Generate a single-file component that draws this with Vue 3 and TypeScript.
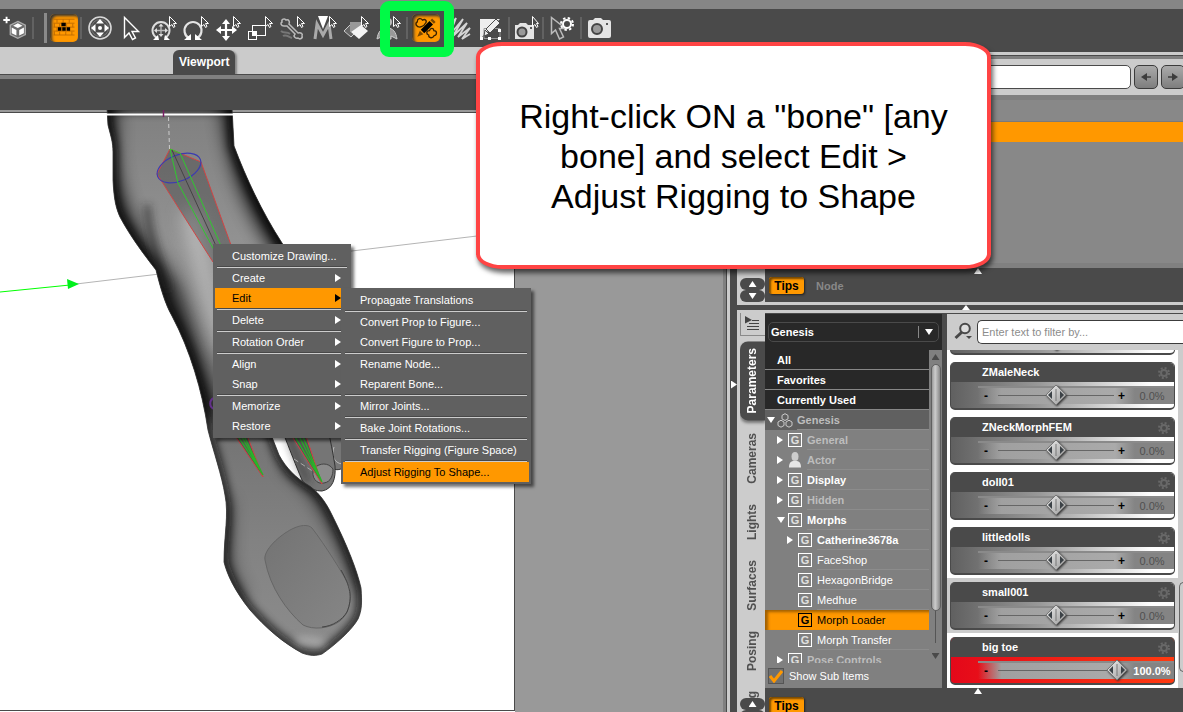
<script setup lang="ts">
import { ref } from 'vue'

interface MenuEntry { label?: string; arrow?: boolean; active?: boolean; sep?: boolean }
interface TreeNode { label: string; level: number; state: 'open' | 'closed' | 'none'; dim?: boolean; bold?: boolean; icon?: 'group' | 'actor' | 'g'; selected?: boolean }
interface Param { id: string; name: string; value: number; text: string; shade?: boolean; hot?: boolean }

const contextMenu: MenuEntry[] = [
  { label: 'Customize Drawing...' }, { sep: true },
  { label: 'Create', arrow: true }, { label: 'Edit', arrow: true, active: true }, { sep: true },
  { label: 'Delete', arrow: true }, { sep: true },
  { label: 'Rotation Order', arrow: true }, { sep: true },
  { label: 'Align', arrow: true }, { label: 'Snap', arrow: true }, { sep: true },
  { label: 'Memorize', arrow: true }, { label: 'Restore', arrow: true },
]
const subMenu: MenuEntry[] = [
  { label: 'Propagate Translations' }, { sep: true },
  { label: 'Convert Prop to Figure...' }, { label: 'Convert Figure to Prop...' }, { sep: true },
  { label: 'Rename Node...' }, { label: 'Reparent Bone...' }, { sep: true },
  { label: 'Mirror Joints...' }, { sep: true },
  { label: 'Bake Joint Rotations...' }, { sep: true },
  { label: 'Transfer Rigging (Figure Space)' }, { sep: true },
  { label: 'Adjust Rigging To Shape...', active: true },
]
const filters: string[] = ['All', 'Favorites', 'Currently Used']
const tree: TreeNode[] = [
  { label: 'Genesis', level: 0, state: 'open', dim: true, bold: true, icon: 'group' },
  { label: 'General', level: 1, state: 'closed', dim: true, bold: true, icon: 'g' },
  { label: 'Actor', level: 1, state: 'closed', dim: true, bold: true, icon: 'actor' },
  { label: 'Display', level: 1, state: 'closed', bold: true, icon: 'g' },
  { label: 'Hidden', level: 1, state: 'closed', dim: true, bold: true, icon: 'g' },
  { label: 'Morphs', level: 1, state: 'open', bold: true, icon: 'g' },
  { label: 'Catherine3678a', level: 2, state: 'closed', bold: true, icon: 'g' },
  { label: 'FaceShop', level: 2, state: 'none', icon: 'g' },
  { label: 'HexagonBridge', level: 2, state: 'none', icon: 'g' },
  { label: 'Medhue', level: 2, state: 'none', icon: 'g' },
  { label: 'Morph Loader', level: 2, state: 'none', icon: 'g', selected: true },
  { label: 'Morph Transfer', level: 2, state: 'none', icon: 'g' },
  { label: 'Pose Controls', level: 1, state: 'closed', dim: true, bold: true, icon: 'g' },
]
const params = ref<Param[]>([
  { id: 'p0', name: '', value: 0, text: '' },
  { id: 'p1', name: 'ZMaleNeck', value: 0, text: '0.0%' },
  { id: 'p2', name: 'ZNeckMorphFEM', value: 0, text: '0.0%' },
  { id: 'p3', name: 'doll01', value: 0, text: '0.0%' },
  { id: 'p4', name: 'littledolls', value: 0, text: '0.0%' },
  { id: 'p5', name: 'small001', value: 0, text: '0.0%', shade: true },
  { id: 'p6', name: 'big toe', value: 100, text: '100.0%', hot: true },
])
const sideTabs: string[] = ['Parameters', 'Cameras', 'Lights', 'Surfaces', 'Posing', 'Shaping']
const figure = ref('Genesis')
const showSub = ref(true)
const filterText = ref('')
const path = ref('')
const footPath = 'M107 108L108 125C111 137 113 142 113 152V180C114 200 116 208 120 217C130 236 145 256 156 270C160 286 165 304 172 316C190 350 202 390 208 430C213 450 222 476 225 495C229 515 224 535 224 562C227 574 234 590 250 610C266 628 282 642 302 653C310 656 316 656 322 654C335 645 352 630 358 619C362 610 362 603 361 588C357 570 347 545 332 515C325 500 316 490 308 485C296 478 286 468 279 455L270 432L300 400V270L282 243C262 212 246 178 234 146L232 108Z'
</script>

<template>
  <div class="app">
    <header class="topstrip"></header>
    <nav class="toolbar" aria-label="Tools">
      <button class="tool first" aria-label="New primitive"><svg viewBox="0 0 32 32"><path d="M7 4v7M3.500 7.500h7" stroke="#fff" stroke-width="2"/><path d="M19 9l8 4v10l-8 4-8-4V13z" fill="#6c6c6c" stroke="#aaa" stroke-width="1.5"/><path d="M19 11l5 2.500-5 2.500-5-2.500zM12.500 15.500l5 2.500v6l-5-2.500zM25.500 15.500l-5 2.500v6l5-2.500z" fill="#fff"/></svg></button>
      <i class="sep"></i><i class="grip"></i>
      <button class="tool on" aria-label="Textured view"><svg viewBox="0 0 32 32"><path d="M4 6h24M4 10.500h24M4 15h24M4 19.500h24M4 24h24M8 6v4M15 6v4M22 6v4M5 11v4M11 11v4M19 11v4M26 11v4M8 15v5M15 15v5M22 15v5M5 20v4M11 20v4M18 20v4M25 20v4" stroke="#bd6a00" fill="none"/><path d="M13 10h5v4h-5zM9 15h4v4H9zM14 15h4v4h-4zM19 15h4v4h-4z" fill="#000"/></svg></button>
      <i class="sep tight"></i>
      <button class="tool" aria-label="Universal tool"><svg viewBox="0 0 32 32" fill="none"><circle cx="16" cy="16" r="11" stroke="#d8d8d8" stroke-width="1.6"/><circle cx="16" cy="16" r="8.500" stroke="#777"/><path d="M16 7l4 4.500h-8zM16 25l4-4.500h-8zM7 16l4.500-4v8zM25 16l-4.500-4v8z" fill="#fff"/><circle cx="16" cy="16" r="2" fill="#fff"/></svg></button>
      <button class="tool" aria-label="Node selection"><svg viewBox="0 0 32 32"><path d="M8.500 5.500v20l4.500-4.500 3.500 6.500 3-1.500-3.500-6.500h6.500z" fill="none" stroke="#fff" stroke-width="1.400"/></svg></button>
      <button class="tool" aria-label="Orbit"><svg viewBox="0 0 32 32" fill="none"><path d="M9 26A8.500 8.500 0 1 1 17 26" stroke="#ddd" stroke-width="2"/><path d="M13 13v11M7.500 18.500h11" stroke="#bbb" stroke-width="1.300"/><path d="M13 11.500l2.500 3h-5zM13 25l2.500-3h-5zM6 18.500l3-2.500v5zM20 18.500l-3-2.500v5z" fill="#ddd"/><path d="M5 28h6l-1-5zM22 28h-6l1-5z" fill="#fff"/><path class="cur" d="M21.500 4.500v10l2.500-2 1.500 3 1.500-1-1.500-3h3z"/></svg></button>
      <button class="tool" aria-label="Rotate"><svg viewBox="0 0 32 32" fill="none"><path d="M9 26A8.500 8.500 0 1 1 17 26" stroke="#e4e4e4" stroke-width="2.200"/><path d="M4 28h7v-6zM22 28h-7v-6z" fill="#fff"/><path class="cur" d="M21.500 4.500v10l2.500-2 1.500 3 1.500-1-1.500-3h3z"/></svg></button>
      <button class="tool" aria-label="Translate"><svg viewBox="0 0 32 32" fill="none"><path d="M14 10v16M6 18h17" stroke="#fff" stroke-width="2.200"/><path d="M14 7l4 5h-8zM14 29l4-5h-8zM4 18l5-4v8zM25 18l-5-4v8z" fill="#fff"/><path class="cur" d="M21.500 4.500v10l2.500-2 1.500 3 1.500-1-1.500-3h3z"/></svg></button>
      <button class="tool" aria-label="Scale"><svg viewBox="0 0 32 32" fill="none" stroke="#fff"><rect x="8.500" y="13.500" width="13" height="10"/><rect x="4.500" y="19.500" width="8" height="8" /><path d="M8 19h5v5H8z" fill="#fff" stroke="none"/><path class="cur" d="M21.500 4.500v10l2.500-2 1.500 3 1.500-1-1.500-3h3z"/></svg></button>
      <button class="tool" aria-label="Joint editor"><svg viewBox="0 0 32 32" fill="none" stroke="#bbb"><path d="M8 14c-3 0-4-3-2-4-1-3 3-4 4-2 3-1 4 2 3 4l9 9c3-1 5 1 4 3 1 2-2 4-4 2-3 1-5-2-3-4l-8-8z" stroke-width="1.500"/><path d="M5 19c3 3 6 0 9 3M7 24c3-2 6 1 9 2" stroke="#777" stroke-width="2"/><path class="cur" d="M21.500 4.500v10l2.500-2 1.500 3 1.500-1-1.500-3h3z"/></svg></button>
      <button class="tool" aria-label="Morph tool"><svg viewBox="0 0 32 32" fill="none"><path d="M7 27l2-15 6 11 6-11 2 15" stroke="#aaa" stroke-width="3"/><path d="M10 4h10l-5 13z" fill="#fff"/><path class="cur" d="M21.500 4.500v10l2.500-2 1.500 3 1.500-1-1.500-3h3z"/></svg></button>
      <button class="tool" aria-label="Surface selection"><svg viewBox="0 0 32 32" fill="none"><path d="M4 19l8-8 6 7-7 7z" fill="#666" stroke="#ccc"/><path d="M10 10h11v10H10z" fill="#999"/><path d="M11 20l10-7 7 6-9 8z" fill="#f4f4f4"/><path class="cur" d="M21.500 4.500v10l2.500-2 1.500 3 1.500-1-1.500-3h3z"/></svg></button>
      <button class="tool" aria-label="Region navigator"><svg viewBox="0 0 32 32" fill="none"><circle cx="16" cy="10" r="4" fill="#bbb"/><path d="M5 27c1-7 4-11 10-11s9 4 10 11l-6-3v3h-8v-3z" fill="#999" stroke="#ccc"/><path class="cur" d="M21.500 4.500v10l2.500-2 1.500 3 1.500-1-1.500-3h3z"/></svg></button>
      <i class="sep"></i>
      <button class="tool on" aria-label="Weight map brush"><svg viewBox="0 0 32 32" fill="none"><path d="M9 15c-4 0-6-4-3-6 0-4 4-5 6-2 3-2 6 1 3 4-1 3-4 3-6 4zM19 24c-3-1-3-5 1-5 1-4 5-3 5 0 4 0 4 5 0 6-1 3-6 3-6-1z" stroke="#3a2200" stroke-width="1.500"/><path d="M20 8l4 4-10 10-4-4z" fill="#000"/><path d="M21 7l2-2 4 4-2 2zM9 19l4 4-7 3z" fill="#7b4700"/></svg></button>
      <button class="tool" aria-label="Hair brush"><svg viewBox="0 0 32 32" fill="none"><path d="M3 21L14 6 9 19M6 25L21 7 11 24l14-13-9 14 12-9-8 11 8-5" stroke="#d5d5d5" stroke-width="1.800"/></svg></button>
      <button class="tool" aria-label="Geometry editor"><svg viewBox="0 0 32 32" fill="none"><path d="M6 7h20L7 26H6z" fill="#eee"/><path d="M10 26.500V16.500h16v10z" stroke="#999"/><path d="M22 7l4 4-10 10-4-4zM11 18l4 4-5 2z" fill="#eee" stroke="#4a4a4a"/><path d="M24 17h3v3h-3zM6 25h3v3H6zM14 25h3v3h-3zM24 25h3v3h-3z" fill="#fff"/></svg></button>
      <i class="sep"></i>
      <button class="tool narrow" aria-label="Spot render"><svg viewBox="0 0 32 32" fill="none"><path d="M3 13h3l2-2h6l2 2h6v14H3z" fill="#e4e4e4"/><circle cx="10" cy="20" r="4.500" fill="#999" stroke="#444" stroke-width="2"/><path d="M18 15h2v2h-2z" fill="#555"/><path class="cur" d="M20.500 4.500v10l2.500-2 1.500 3 1.500-1-1.500-3h2z"/></svg></button>
      <i class="sep"></i>
      <button class="tool" aria-label="Tool settings"><svg viewBox="0 0 32 32" fill="none"><path d="M5.500 5.500v16l4-3.500 4 9 4-2-4-8.500h6z" stroke="#bbb" stroke-width="1.500"/><circle cx="21" cy="12" r="4" stroke="#fff" stroke-width="2"/><circle cx="21" cy="12" r="6" stroke="#fff" stroke-width="2" stroke-dasharray="2.400 2.310"/></svg></button>
      <i class="sep"></i>
      <button class="tool" aria-label="Render"><svg viewBox="0 0 32 32" fill="none"><path d="M4 10q0-2 2-2h3l2-2h6l2 2h6q2 0 2 2v14q0 2-2 2H6q-2 0-2-2z" fill="#e4e4e4"/><circle cx="13" cy="17" r="5" fill="#999" stroke="#444" stroke-width="2"/><path d="M22 11h2v2h-2z" fill="#555"/></svg></button>
    </nav>

    <main class="work">
      <section class="viewport">
        <div class="tabstrip"><button class="vtab">Viewport</button></div>
        <div class="rule"></div>
        <div class="vbar"></div>
        <div class="stage">
          <svg class="scene" viewBox="0 110 515 602" preserveAspectRatio="xMinYMin slice" aria-label="Foot model">
            <defs>
              <clipPath id="foot"><path :d="footPath" /></clipPath>
              <linearGradient id="leg" x1="0" x2="0" y1="110" y2="650" gradientUnits="userSpaceOnUse"><stop offset="0" stop-color="#808080" /><stop offset=".25" stop-color="#929292" /><stop offset=".6" stop-color="#747474" /><stop offset=".8" stop-color="#828282" /><stop offset="1" stop-color="#8c8c8c" /></linearGradient>
              <linearGradient id="nail" x1="0" x2="1" y1="0" y2="1"><stop offset="0" stop-color="#737373" /><stop offset="1" stop-color="#868686" /></linearGradient>
              <filter id="soft" filterUnits="userSpaceOnUse" x="0" y="60" width="515" height="660"><feGaussianBlur stdDeviation="9" /></filter>
              <filter id="soft2" filterUnits="userSpaceOnUse" x="0" y="60" width="515" height="660"><feGaussianBlur stdDeviation="4" /></filter>
            </defs>
            <rect y="110" width="515" height="602" fill="#fff" />
            <path d="M0 111h515" stroke="#999" stroke-width="2" />
            <path d="M0 112.500h515M514.500 112v599M0 710.500h515" stroke="#4a4a4a" fill="none" />
            <path d="M76 284L477 236" stroke="#b4b4b4" />
            <path d="M0 292L70 285" stroke="#0f0" />
            <path d="M67 279l12 5-11 5z" fill="#00f01c" />
            <path d="M322 430c8 12 6 34 10 38 5 4 12 0 14-2v-36z" fill="#777" stroke="#333" />
            <path d="M334 447c-3 8 0 16 8 17" fill="none" stroke="#bbb" />
            <path d="M282 430C290 450 296 466 302 480C308 489 316 491 322 491C333 489 336 478 335 466C333 452 330 440 328 428Z" fill="#757575" stroke="#333" />
            <path d="M288 434C297 456 302 472 309 482" stroke="#222" stroke-width="6" fill="none" filter="url(#soft2)" opacity=".6" />
            <path d="M314 468c-4 9 3 17 10 15 7-1 9-8 9-14-5-7-13-6-19-1z" fill="#8b8b8b" stroke="#444" />
            <path d="M294 459l20 13" stroke="#aaa" stroke-dasharray="5 3" />
            <path :d="footPath" fill="url(#leg)" />
            <g clip-path="url(#foot)" fill="none">
              <path :d="footPath" stroke="#111" stroke-width="9" filter="url(#soft2)" opacity=".85" />
              <path d="M104 60V150C106 200 118 225 166 290L210 420" stroke="#000" stroke-width="24" filter="url(#soft)" opacity=".8" />
              <path d="M236 60C236 160 260 205 300 262" stroke="#000" stroke-width="32" filter="url(#soft)" opacity=".85" />
              <path d="M286 462C315 480 335 515 364 590" stroke="#000" stroke-width="12" filter="url(#soft)" opacity=".7" />
              <path d="M222 500C226 540 212 560 240 600" stroke="#111" stroke-width="14" filter="url(#soft)" opacity=".6" />
              <path d="M147 205C149 235 158 260 168 290" stroke="#222" stroke-width="7" filter="url(#soft2)" opacity=".6" />
              <path d="M190 210C200 260 212 310 226 350" stroke="#ddd" stroke-width="16" filter="url(#soft)" opacity=".6" />
              <path d="M296 642C305 640 315 640 325 645" stroke="#ccc" stroke-width="8" filter="url(#soft2)" opacity=".5" />
            </g>
            <path :d="footPath" fill="none" stroke="#333" stroke-width=".8" />
            <path d="M265 560C263 550 280 535 292 529C300 525 308 524 312 528C325 545 342 572 350 587C352 600 349 614 340 621C329 629 313 630 303 625C287 611 270 588 265 560Z" fill="url(#nail)" stroke="#666" />
            <path d="M341 570C350 586 353 597 347 612C342 620 333 626 322 627" fill="none" stroke="#444" />
            <path d="M106 114.500h128" stroke="#fff" stroke-width="2" />
            <path d="M163.500 110v7" stroke="#7a1f65" stroke-width="1.500" />
            <path d="M168.500 117l1 32" stroke="#ccc" stroke-dasharray="4 3" />
            <path d="M170 149L157 174L213 262L240 270L201 162Z" fill="#333" fill-opacity=".35" stroke="#d04444" />
            <ellipse cx="179" cy="168" rx="23" ry="13" transform="rotate(-22 179 168)" fill="none" stroke="#3c3cb0" stroke-width="1.200" />
            <path d="M170 149L178 183L214 250M170 149L180 153L222 248" fill="none" stroke="#2fca2f" />
            <path d="M172 150L217 248" stroke="#444" />
            <path d="M231 430L263 477L245 430ZM288 430L322 484L304 430Z" fill="#555" stroke="#d04444" />
            <path d="M234 430L263 475L241 430M291 430L322 482L300 430M238 430L263 475M296 430L322 482" fill="none" stroke="#28b428" stroke-width="1.300" />
            <path d="M214 398c-5 2-5 9 0 11" stroke="#63308a" fill="none" stroke-width="2" />
          </svg>
        </div>
      </section>

      <div class="splitter"><span class="tri right"></span></div>

      <aside class="docks">
        <section class="dock upper">
          <div class="side"><div class="scroller"><button aria-label="Scroll tabs up"><span class="tri up"></span></button><button aria-label="Scroll tabs down"><span class="tri down"></span></button></div></div>
          <div class="pane">
            <div class="rule thin"></div>
            <div class="pathbar">
              <input v-model="path" type="text" aria-label="Path" />
              <button aria-label="Back"><svg viewBox="0 0 12 10"><path d="M1 5l6-4v3.200h4v1.600H7V9z" fill="#3c3c3c" /></svg></button>
              <button aria-label="Forward"><svg viewBox="0 0 12 10"><path d="M11 5L5 1v3.200H1v1.600h4V9z" fill="#3c3c3c" /></svg></button>
            </div>
            <div class="scenelist"><div class="scenerow"></div></div>
            <div class="tipbar"><span class="tri up grab"></span><button class="tips">Tips</button><button class="node">Node</button></div>
          </div>
        </section>
        <div class="hsplit"><span class="tri up"></span></div>
        <section class="dock lower">
          <div class="side">
            <button class="panemenu" aria-label="Pane options"><svg viewBox="0 0 18 16"><path d="M1 0l7 4-7 3.500z" fill="#444" /><path d="M8 4.500h7M5 7.500h10M3 10.500h12M3 13.500h12" stroke="#444" /></svg></button>
            <div class="tabs"><button v-for="(t, i) in sideTabs" :key="t" :class="{ current: i === 0 }">{{ t }}</button></div>
            <div class="scroller cut"><button aria-label="Scroll up"><span class="tri up"></span></button><button aria-label="Scroll down"></button></div>
          </div>
          <div class="pane">
            <div class="panels">
              <div class="treepanel">
                <div class="picker"><div class="selectbox"><select v-model="figure" aria-label="Figure"><option>Genesis</option></select><i></i><span class="tri down"></span></div></div>
                <div class="treewrap">
                  <div class="tree">
                    <button v-for="f in filters" :key="f" class="filter">{{ f }}</button>
                    <button v-for="n in tree" :key="n.label" class="tnode" :class="['l' + n.level, { dim: n.dim, bold: n.bold, selected: n.selected }]">
                      <span class="twist"><span v-if="n.state !== 'none'" class="tri" :class="n.state === 'open' ? 'down' : 'right'"></span></span>
                      <svg v-if="n.icon === 'group'" class="gi" viewBox="0 0 16 15"><path d="M8 .7l3 1.700v3.500L8 7.500 5 5.900V2.400zM4 7.200L7 9v3.500l-3 1.700L1 12.500V9zM12 7.200L15 9v3.500l-3 1.700-3-1.700V9z" fill="none" stroke="#ccc" /></svg>
                      <svg v-else-if="n.icon === 'actor'" class="ga" viewBox="0 0 14 16"><ellipse cx="7" cy="4.500" rx="3.500" ry="4.500" fill="#ccc" /><path d="M1 15.500c0-5 2-6 4-6.500h4c2 .5 4 1.500 4 6.500z" fill="#e6e6e6" /></svg>
                      <span v-else class="gbox">G</span>
                      <span class="tlabel">{{ n.label }}</span>
                    </button>
                  </div>
                  <div class="scrollbar"><span class="tri up"></span><i class="thumb"></i><i class="line"></i><span class="tri down"></span></div>
                </div>
                <label class="subitems"><input v-model="showSub" type="checkbox" /><span>Show Sub Items</span></label>
              </div>
              <div class="parampanel">
                <div class="search">
                  <svg viewBox="0 0 20 20"><circle cx="11" cy="6.500" r="4.800" fill="#ddd" stroke="#484848" stroke-width="2" /><path d="M8 10l-6.500 6" stroke="#484848" stroke-width="3" /><path d="M12 14h6l-3 3z" fill="#484848" /></svg>
                  <input v-model="filterText" type="text" placeholder="Enter text to filter by..." aria-label="Filter" />
                </div>
                <div class="paramwrap">
                  <div class="paramlist">
                    <div v-for="p in params" :key="p.id" class="item" :class="{ shade: p.shade }">
                      <div class="card" :class="{ hot: p.hot }">
                        <div class="chead"><label :for="p.id">{{ p.name }}</label><svg viewBox="0 0 14 14"><circle cx="7" cy="7" r="3" fill="none" stroke="#686868" stroke-width="2" /><circle cx="7" cy="7" r="5" fill="none" stroke="#686868" stroke-width="2" stroke-dasharray="2 1.930" /></svg></div>
                        <div class="cbody">
                          <div class="groove"><span>-</span><span>+</span></div>
                          <input :id="p.id" v-model.number="p.value" type="range" min="-100" max="100" :aria-label="p.name || 'Morph'" />
                          <output :for="p.id">{{ p.text }}</output>
                        </div>
                      </div>
                    </div>
                  </div>
                  <div class="pscroll"><i></i></div>
                </div>
              </div>
            </div>
            <div class="tipbar short"><span class="tri up grab"></span><button class="tips">Tips</button></div>
          </div>
        </section>
      </aside>
    </main>

    <div class="menu context" role="menu">
      <template v-for="(m, i) in contextMenu" :key="i"><hr v-if="m.sep" /><button v-else role="menuitem" :class="{ active: m.active }"><span>{{ m.label }}</span><span v-if="m.arrow" class="tri right"></span></button></template>
    </div>
    <div class="menu sub" role="menu">
      <template v-for="(m, i) in subMenu" :key="i"><hr v-if="m.sep" /><button v-else role="menuitem" :class="{ active: m.active }"><span>{{ m.label }}</span></button></template>
    </div>
    <div class="ring"></div>
    <div class="callout"><p>Right-click ON a "bone" [any bone] and select Edit &gt; Adjust Rigging to Shape</p></div>
  </div>
</template>

<style>
body { overflow: hidden; background: #4a4a4a; }
</style>

<style scoped>
.app, .app * { box-sizing: border-box; }
.app { position: relative; display: flex; flex-direction: column; height: 100vh; overflow: hidden; background: #4a4a4a; font: 11px/20px "Liberation Sans", Arial, sans-serif; color: #fff; }
button { padding: 0; margin: 0; border: 0; background: none; color: inherit; font: inherit; }
input, select { margin: 0; font: inherit; }
.topstrip { flex: 0 0 9px; background: #868686; }
.toolbar { flex: 0 0 38px; display: flex; align-items: center; }
.tool { flex: 0 0 32px; height: 32px; }
.tool svg { display: block; width: 32px; height: 32px; }
.tool.first { flex-basis: 30px; }
.tool.first svg { width: 30px; }
.tool.narrow { flex-basis: 28px; overflow: hidden; }
.tool.on svg { background: #ff9800; border-radius: 5px; box-shadow: inset 2px 2px 3px #333; width: 28px; height: 28px; margin: 0 auto; }
.cur { fill: #4a4a4a; stroke: #fff; stroke-width: 1; }
.sep { flex: 0 0 2px; height: 22px; margin: 0 2px; background: #626262; }
.sep.tight { margin: 0 2px 0 0; }
.grip { flex: 0 0 3px; height: 30px; margin: 0 1px 0 8px; background: #8a8a8a; }
.work { flex: 1; min-height: 0; display: flex; }
.viewport { flex: 1; min-width: 0; display: flex; flex-direction: column; }
.tabstrip { flex: 0 0 27px; background: #cbcbcb; padding: 3px 0 0 173px; }
.vtab { display: block; height: 24px; padding: 0 6px; background: #4a4a4a; border-radius: 6px 6px 0 0; font-weight: bold; font-size: 12px; box-shadow: 2px 1px 2px #888; }
.rule { flex: 0 0 5px; border-top: 1px solid #4a4a4a; background: #808080; }
.rule.thin { flex-basis: 4px; }
.vbar { flex: 0 0 31px; }
.stage { flex: 1; min-height: 0; background: #999; border-right: 3px solid #808080; }
.scene { display: block; width: 515px; height: 100%; }
.splitter { flex: 0 0 11px; border-left: 1px solid #4a4a4a; background: linear-gradient(90deg, #ccc 3px, #4a4a4a 3px); display: flex; align-items: center; justify-content: flex-end; padding-top: 10px; }
.tri { display: block; width: 8px; height: 6px; background: currentColor; flex: none; }
.tri.up { clip-path: polygon(50% 0, 100% 100%, 0 100%); }
.tri.down { clip-path: polygon(0 0, 100% 0, 50% 100%); }
.tri.right { width: 6px; height: 8px; clip-path: polygon(0 0, 100% 50%, 0 100%); }
.docks { flex: 0 0 446px; min-width: 0; display: flex; flex-direction: column; }
.dock { display: flex; min-height: 0; }
.upper { flex: 0 0 258px; border-top: 5px solid #4a4a4a; border-bottom: 3px solid #ccc; }
.lower { flex: 1; border-top: 3px solid #ccc; }
.side { flex: 0 0 28px; background: #ccc; padding-left: 3px; display: flex; flex-direction: column; justify-content: flex-end; min-height: 0; }
.lower .side { justify-content: flex-start; }
.scroller { height: 24px; flex: none; overflow: hidden; }
.scroller button { display: flex; width: 25px; height: 12px; align-items: center; justify-content: center; background: #4a4a4a; border-radius: 6px; }
.scroller.cut { height: 14px; }
.pane { flex: 1; min-width: 0; display: flex; flex-direction: column; }
.upper .pane { border-top: 3px solid #ccc; }
.pathbar { flex: 0 0 36px; background: #ccc; display: flex; gap: 3px; padding: 6px 0; overflow: hidden; }
.pathbar input { flex: 1 0 366px; min-width: 0; border: 1px solid #4a4a4a; border-radius: 5px; background: #fff; }
.pathbar button { flex: 0 0 24px; border: 1px solid #3c3c3c; border-radius: 5px; background: linear-gradient(#aaa, #7e7e7e); display: flex; align-items: center; justify-content: center; }
.pathbar svg { width: 12px; height: 10px; }
.scenelist { flex: 1; background: #888; border: solid #808080; border-width: 5px 0; padding-top: 21px; }
.scenerow { height: 21px; background: #ff9800; border-top: 1px solid #7a7a7a; }
.tipbar { flex: 0 0 34px; min-height: 0; display: flex; align-items: flex-start; padding: 9px 0 0 4px; gap: 12px; position: relative; font-weight: bold; }
.tipbar.short { flex: none; height: 24px; overflow: hidden; }
.grab { position: absolute; left: 209px; top: 0; }
.tips { flex: none; width: 35px; height: 17px; line-height: 16px; background: #ff9800; color: #000; font-size: 12px; font-weight: bold; border-radius: 3px; box-shadow: inset 2px 2px 2px #7a4a00, 1px 1px 2px #222; }
.node { color: #888; font-size: 11px; line-height: 18px; font-weight: bold; }
.hsplit { flex: 0 0 5px; display: flex; align-items: center; padding-left: 225px; }
.hsplit .tri { height: 5px; }
.panemenu { flex: 0 0 23px; border: solid #8a8a8a; border-width: 0 0 1px 1px; display: flex; align-items: center; justify-content: center; }
.panemenu svg { width: 18px; height: 16px; }
.tabs { flex: 1; min-height: 0; overflow: hidden; margin-top: 5px; display: flex; flex-direction: column; gap: 6px; }
.tabs button { flex: none; writing-mode: vertical-rl; transform: rotate(180deg); width: 25px; line-height: 25px; padding: 7px 0; font-size: 12px; font-weight: bold; color: #505050; white-space: nowrap; text-align: center; }
.tabs .current { background: #4a4a4a; color: #fff; border-radius: 0 8px 8px 0; box-shadow: 0 -2px 3px #777; }
.panels { flex: 1; min-height: 0; display: flex; border-top: 1px solid #4a4a4a; }
.treepanel { flex: 0 0 177px; display: flex; flex-direction: column; background: #808080; }
.picker { flex: 0 0 36px; background: #282828; padding: 8px 3px; }
.selectbox { display: flex; align-items: center; height: 20px; border: 1px solid #4a4a4a; border-radius: 5px; padding-right: 5px; }
.selectbox select { flex: 1; min-width: 0; appearance: none; border: 0; background: none; color: #fff; font-weight: bold; padding: 0 2px; outline: 0; }
.selectbox i { width: 1px; height: 12px; background: #888; margin-right: 6px; }
.treewrap { flex: 1; min-height: 0; display: flex; }
.tree { flex: 1; min-width: 0; overflow: hidden; }
.filter { display: block; width: 100%; height: 20px; padding-left: 12px; text-align: left; background: #282828; border-bottom: 1px solid #888; font-weight: bold; line-height: 20px; }
.tnode { display: flex; align-items: center; width: 100%; height: 20px; text-align: left; }
.tnode.l0 { background: #606060; padding-left: 2px; }
.tnode.l1 { padding-left: 12px; }
.tnode.l2 { padding-left: 22px; }
.twist { flex: 0 0 11px; }
.l0 .twist { flex-basis: 10px; }
.gi { width: 16px; height: 15px; margin-right: 4px; }
.ga { width: 14px; height: 16px; margin-right: 5px; }
.gbox { width: 14px; height: 14px; margin-right: 5px; border: 1px solid #fff; font-weight: bold; line-height: 12px; text-align: center; color: #e0e0e0; }
.tlabel { flex: 1; height: 20px; border-bottom: 1px solid #8c8c8c; white-space: nowrap; }
.bold { font-weight: bold; }
.dim .tlabel { color: #bdbdbd; }
.selected { background: #ff9800; color: #000; box-shadow: inset 3px 2px 3px #a05f00; }
.selected .gbox { border-color: #000; color: #000; }
.selected .tlabel { border-color: transparent; }
.scrollbar { flex: 0 0 13px; display: flex; flex-direction: column; align-items: center; padding: 4px 0; color: #4a4a4a; }
.scrollbar .thumb { flex: 0 1 247px; width: 10px; margin-top: 4px; border-radius: 5px; background: linear-gradient(90deg, #999, #ccc 40%, #888); border: 1px solid #606060; }
.scrollbar .line { flex: 1; width: 1px; background: #555; margin-bottom: 10px; }
.subitems { flex: 0 0 25px; display: flex; align-items: center; gap: 5px; padding-left: 3px; }
.subitems input { appearance: none; width: 16px; height: 16px; border: 1px solid #555; background: #707070 url("data:image/svg+xml,%3Csvg xmlns='http://www.w3.org/2000/svg' viewBox='0 0 14 14'%3E%3Cpath d='M1 7l4 5 8-10' fill='none' stroke='%23ff9800' stroke-width='3'/%3E%3C/svg%3E"); }
.parampanel { flex: 1; min-width: 0; margin-left: 5px; background: #ccc; display: flex; flex-direction: column; overflow: hidden; }
.search { flex: 0 0 36px; display: flex; align-items: center; padding-left: 7px; gap: 3px; }
.search svg { flex: 0 0 20px; height: 20px; }
.search input { flex: 1; min-width: 0; height: 24px; border: 1px solid #3c3c3c; border-right: 0; border-radius: 5px 0 0 5px; background: #fff; padding: 0 4px; color: #333; }
.search input::placeholder { color: #8c8c8c; }
.paramwrap { flex: 1; min-height: 0; display: flex; background: #fff; overflow: hidden; }
.paramlist { flex: 1; min-width: 0; margin-top: -47px; }
.item { height: 55px; padding: 4px 3px 3px; }
.item.shade { background: #ccc; }
.card { height: 48px; border: 1px solid #4a4a4a; border-bottom-width: 2px; border-radius: 5px; overflow: hidden; background: linear-gradient(90deg, #606060, #999 40%, #fff 90%); }
.chead { height: 19px; padding: 0 3px 0 31px; background: #4a4a4a; display: flex; align-items: center; justify-content: space-between; font-weight: bold; line-height: 16px; }
.chead label { padding-bottom: 2px; }
.chead svg { width: 14px; height: 14px; }
.cbody { display: grid; grid-template-columns: 33px 144px 1fr; grid-template-rows: 26px; align-items: center; }
.groove { grid-area: 1 / 2 / 2 / 4; height: 18px; margin-left: -6px; display: flex; justify-content: space-between; padding: 0 49px 0 6px; color: #000; font-weight: bold; font-size: 12px; line-height: 16px; background: linear-gradient(90deg, #80808000, #a0a0a0 12%, #aaa 70%, #848484 80%); border-top: 2px solid #8a8a8a; }
.cbody input { grid-area: 1 / 2; appearance: none; width: 100%; height: 24px; background: linear-gradient(#666, #666) 14px 12px / 116px 1px no-repeat; }
.cbody input::-webkit-slider-thumb { appearance: none; width: 22px; height: 22px; filter: drop-shadow(1px 1px 1px #333); background: url("data:image/svg+xml,%3Csvg xmlns='http://www.w3.org/2000/svg' viewBox='0 0 22 22'%3E%3Cdefs%3E%3ClinearGradient id='a' x2='1' y2='1'%3E%3Cstop stop-color='%23eee'/%3E%3Cstop offset='1' stop-color='%23999'/%3E%3C/linearGradient%3E%3C/defs%3E%3Cpath d='M11 1l10 10-10 10L1 11z' fill='url(%23a)' stroke='%23777'/%3E%3Cpath d='M11 5v12' stroke='%23777'/%3E%3Cpath d='M7 7v8l-4-4zM15 7v8l4-4z' fill='%233c4247'/%3E%3C/svg%3E"); }
.cbody output { grid-area: 1 / 3; height: 18px; padding-left: 2px; font-size: 11px; line-height: 21px; text-align: center; color: #505050; }
.hot { background: linear-gradient(90deg, #e4081a, #ff3a10); }
.hot output { color: #fff; font-weight: bold; }
.pscroll { flex: 0 0 5px; min-width: 0; overflow: hidden; background: #ccc; display: flex; align-items: flex-end; padding-bottom: 16px; }
.pscroll i { flex: none; width: 8px; height: 90px; border: 1px solid #666; border-right: 0; border-radius: 5px 0 0 5px; margin-left: 1px; }
.menu { position: absolute; padding: 2px; background: #606060; box-shadow: 3px 3px 3px rgba(0, 0, 0, .55); }
.menu button { display: flex; align-items: center; justify-content: space-between; width: 100%; height: 20px; padding: 0 8px 0 17px; white-space: nowrap; }
.menu hr { height: 2px; margin: 0 2px; border: solid; border-width: 1px 0 0; border-color: #484848; background: #ccc; }
.menu .active { background: #ff9800; color: #000; }
.context { left: 213px; top: 244px; width: 138px; }
.sub { left: 341px; top: 288px; width: 190px; }
.ring { position: absolute; left: 380px; top: 1px; width: 74px; height: 56px; border: 10px solid #00fa46; border-radius: 9px; }
.callout { position: absolute; left: 476px; top: 42px; width: 515px; height: 227px; display: flex; align-items: center; justify-content: center; padding: 0 30px; background: #fff; border: 4px solid #ff4444; border-radius: 26px / 15px; box-shadow: 2px 4px 5px rgba(0, 0, 0, .6); }
.callout p { margin: 0; color: #000; font-size: 34px; line-height: 40px; text-align: center; }
</style>
